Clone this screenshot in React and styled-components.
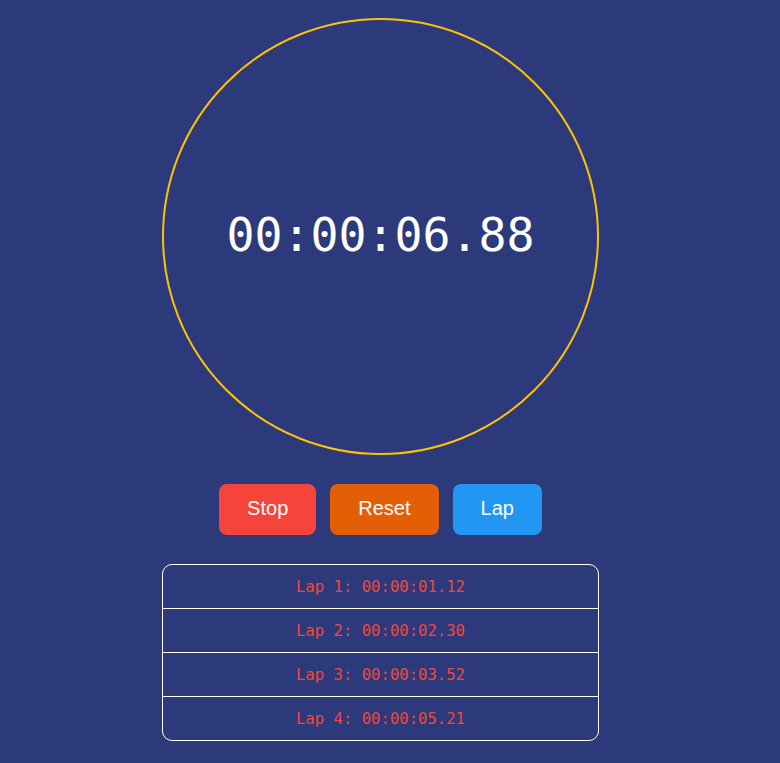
import React from 'react'
import { styled, createGlobalStyle } from 'styled-components'

const GlobalStyle = createGlobalStyle`
body {
  margin: 0;
  background-color: #2c3a7b;
  font-family: "Liberation Sans", Arial, sans-serif;
}
`

const laps = ['00:00:01.12', '00:00:02.30', '00:00:03.52', '00:00:05.21']

const App = () => {
  return (
    <Page>
      <GlobalStyle />
      <Dial>
        <Time>00:00:06.88</Time>
      </Dial>
      <Controls>
        <Button color="#f5453a">Stop</Button>
        <Button color="#e35f05">Reset</Button>
        <Button color="#2196f3">Lap</Button>
      </Controls>
      <LapList>
        {laps.map((t, i) => (
          <LapRow key={i}>Lap {i + 1}: {t}</LapRow>
        ))}
      </LapList>
    </Page>
  )
}

const Page = styled.div`
width: 761px;
display: flex;
flex-direction: column;
align-items: center;
padding-top: 18px;
`

const Dial = styled.div`
width: 433px;
height: 433px;
border: 2px solid #ffc107;
border-radius: 50%;
display: flex;
align-items: center;
justify-content: center;
`

const Time = styled.div`
color: #ffffff;
font-family: "DejaVu Sans Mono", monospace;
font-size: 46.5px;
line-height: 1;
margin-top: -2px;
`

const Controls = styled.div`
display: flex;
gap: 14px;
margin-top: 29px;
`

const Button = styled.button`
background-color: ${({ color }) => color};
color: #ffffff;
border: none;
border-radius: 8px;
font-family: "Liberation Sans", Arial, sans-serif;
font-size: 20px;
line-height: 23px;
padding: 13px 28px 15px;
`

const LapList = styled.div`
width: 435px;
margin-top: 29px;
border: 1px solid #ffffff;
border-radius: 10px;
`

const LapRow = styled.div`
height: 43px;
display: flex;
align-items: center;
justify-content: center;
color: #f5453a;
font-family: "DejaVu Sans Mono", monospace;
font-size: 15.6px;
& + & {
  border-top: 1px solid #ffffff;
}
`

export default App
